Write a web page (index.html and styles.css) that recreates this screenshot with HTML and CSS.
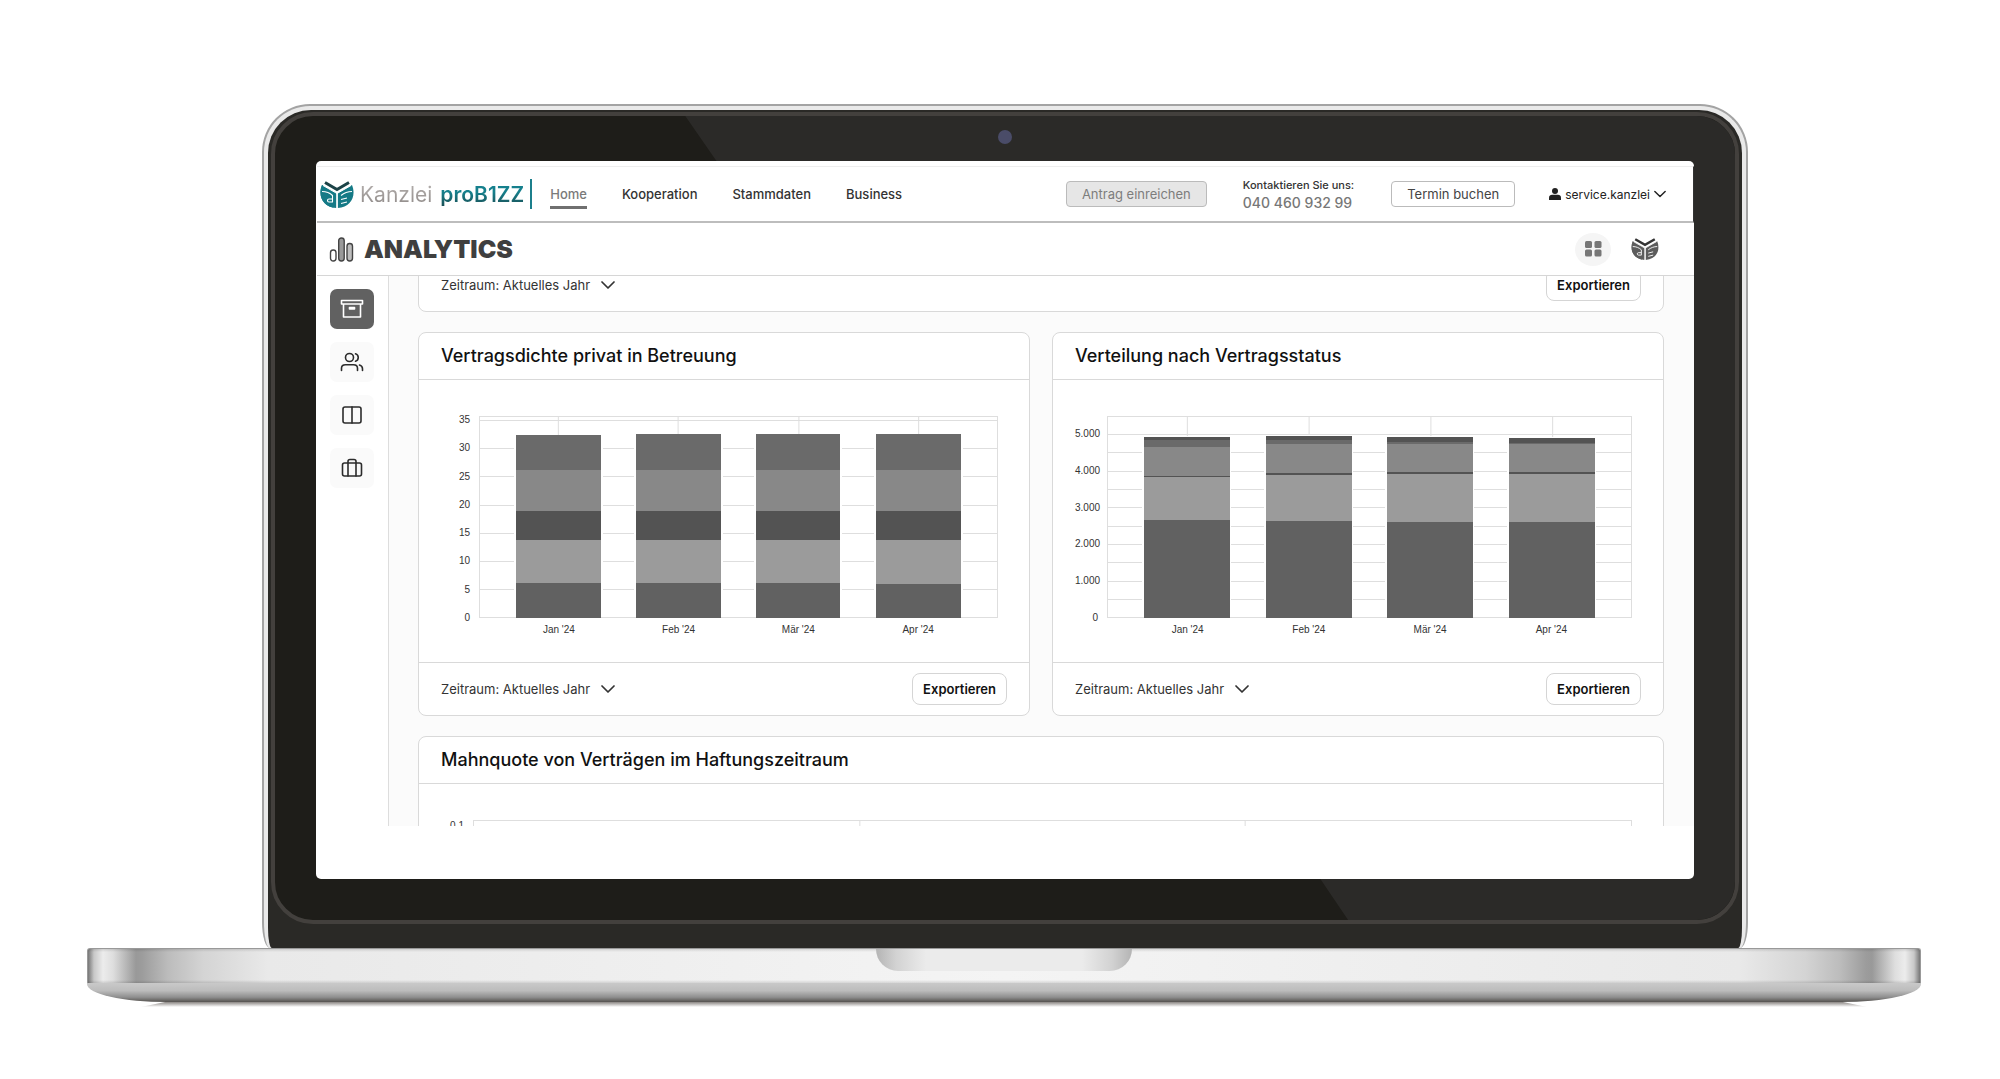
FILE: index.html
```
<!DOCTYPE html>
<html lang="de">
<head>
  <meta charset="UTF-8">
  <meta name="viewport" content="width=device-width, initial-scale=1">
  <title>Analytics – Kanzlei proB1ZZ</title>
  <link rel="stylesheet" href="styles.css">
</head>
<body>

  <svg class="sprite" aria-hidden="true">
    <symbol id="chevron" viewBox="0 0 14 8">
      <path d="M1 1l6 6 6-6" fill="none" stroke="currentColor" stroke-width="1.700" stroke-linecap="round" stroke-linejoin="round"/>
    </symbol>
    <symbol id="owl" viewBox="0 0 34 27">
      <path class="owl-wing" d="M2 4L16.200 12V27C4-.5 4 25.500 16.200 27C3 26-2.500 15 2 4zM32 4L17.800 12V27C31 26 36.500 15 32 4z"/>
      <path class="owl-wing" d="M2 4L16.200 12V27C3 26-2.500 15 2 4z"/>
      <path class="owl-brow" d="M5 1.500l12 7 12-7" fill="none" stroke-width="3"/>
      <path d="M3 4.500l14 8 14-8M17 12v15" fill="none" stroke="#fff" stroke-width="1"/>
      <path d="M2 10.500c4 0 8 1.500 10.500 4v6.500H9c-2 0-2-3 0-3h3.500M32 10.500c-4 0-8 1.500-11 4M21 18.500l6-1.500M21 22.500l6-1.500" fill="none" stroke="#fff" stroke-width="1.100"/>
    </symbol>
  </svg>

  <div class="laptop">
    <div class="lid">
      <div class="bezel">
        <div class="glass">
          <span class="camera"></span>

          <div class="screen">
            <header class="topbar">
              <a class="brand" href="#">
                <svg class="brand-logo" viewBox="0 0 34 27"><use href="#owl"/></svg>
                <span class="brand-name">Kanzlei</span>
                <span class="brand-product">proB1ZZ</span>
              </a>
              <nav class="nav">
                <a class="active" href="#">Home</a>
                <a href="#">Kooperation</a>
                <a href="#">Stammdaten</a>
                <a href="#">Business</a>
              </nav>
              <div class="actions">
                <button class="btn btn-muted" type="button">Antrag einreichen</button>
                <div class="contact">
                  <span>Kontaktieren Sie uns:</span>
                  <a href="tel:04046093299">040 460 932 99</a>
                </div>
                <button class="btn" type="button">Termin buchen</button>
                <button class="user" type="button">
                  <svg width="12" height="12" viewBox="0 0 12 12" fill="currentColor"><circle cx="6" cy="3" r="3"/><path d="M0 12V9.500C0 7.700 1.500 6.800 3 6.800h6c1.500 0 3 .9 3 2.700V12z"/></svg>
                  service.kanzlei
                  <svg width="12" height="8"><use href="#chevron"/></svg>
                </button>
              </div>
            </header>

            <div class="titlebar">
              <svg class="title-icon" viewBox="0 0 24 25" fill="#bdbdbd" stroke="#444" stroke-width="1.400">
                <rect x="1" y="13" width="5.500" height="11" rx="2.700" fill="#fff"/>
                <rect x="9.200" y="1" width="5.500" height="23" rx="2.700" fill="#999"/>
                <rect x="17.500" y="6.500" width="5.500" height="17.500" rx="2.700"/>
              </svg>
              <h1>ANALYTICS</h1>
              <button class="apps" type="button" aria-label="Apps">
                <svg width="17" height="16" viewBox="0 0 17 16" fill="#777"><rect width="7" height="7" rx="1.500"/><rect x="9.500" width="7" height="7" rx="1.500"/><rect y="8.500" width="7" height="7" rx="1.500"/><rect x="9.500" y="8.500" width="7" height="7" rx="1.500"/></svg>
              </button>
              <svg class="title-logo" viewBox="0 0 34 27"><use href="#owl"/></svg>
            </div>

            <div class="workspace">
              <aside class="sidebar">
                <button class="side-btn selected" type="button" aria-label="Archiv">
                  <svg width="24" height="20" viewBox="0 0 24 20"><path d="M1.500 1.500h21v3.500h-21zM3.500 5v13h17V5M9.500 8.500h5v1.500h-5z"/></svg>
                </button>
                <button class="side-btn" type="button" aria-label="Kunden">
                  <svg width="24" height="20" viewBox="0 0 24 20"><circle cx="9.500" cy="5.500" r="4"/><path d="M1.500 18.500v-2.200c0-2 1.700-3.500 4-3.500h8c2.300 0 4 1.500 4 3.500v2.200M15.500 1.700a4 4 0 0 1 0 7.600M19.500 13c2 .6 3 1.900 3 3.700v1.800"/></svg>
                </button>
                <button class="side-btn" type="button" aria-label="Spalten">
                  <svg width="24" height="20" viewBox="0 0 24 20"><rect x="3" y="2" width="18" height="16" rx="2"/><path d="M12 2v16"/></svg>
                </button>
                <button class="side-btn" type="button" aria-label="Verträge">
                  <svg width="24" height="20" viewBox="0 0 24 20"><rect x="2.500" y="5" width="19" height="13" rx="2"/><path d="M8 18V3.500C8 2.300 8.700 1.500 10 1.500h4c1.300 0 2 .8 2 2V18"/></svg>
                </button>
              </aside>

              <main class="content">
                <section class="card wide scrolled">
                  <footer class="card-foot">
                    <button class="period" type="button">Zeitraum: Aktuelles Jahr <svg width="14" height="8"><use href="#chevron"/></svg></button>
                    <button class="export" type="button">Exportieren</button>
                  </footer>
                </section>

                <section class="card">
                  <h2>Vertragsdichte privat in Betreuung</h2>
                  <div class="chart">
                    <div class="y-axis tens">
                      <span>35</span><span>30</span><span>25</span><span>20</span><span>15</span><span>10</span><span>5</span><span>0</span>
                    </div>
                    <svg class="plot" viewBox="0 0 520 202" preserveAspectRatio="none">
                      <path class="lines" d="M0 4.500h520M0 32.500h520M0 60.500h520M0 89.500h520M0 117.500h520M0 145.500h520M0 173.500h520M79.500 0v20M199.500 0v20M320.500 0v20M440.500 0v20"/>
                      <rect class="lines" x=".5" y=".5" width="519" height="201"/>
                      <path class="halo" d="M35 19h89v182h-89zM155 18h89v183h-89zM276 18h88v183h-88zM396 18h89v183h-89z"/>
                      <path class="c1" d="M37 167h85v35H37zM157 167h85v35h-85zM278 167h84v35h-84zM398 168h85v34h-85z"/>
                      <path class="c2" d="M37 124h85v43H37zM157 124h85v43h-85zM278 124h84v43h-84zM398 124h85v44h-85z"/>
                      <path class="c3" d="M37 95h85v29H37zM157 95h85v29h-85zM278 95h84v29h-84zM398 95h85v29h-85z"/>
                      <path class="c4" d="M37 54h85v41H37zM157 54h85v41h-85zM278 54h84v41h-84zM398 54h85v41h-85z"/>
                      <path class="c5" d="M37 19h85v35H37zM157 18h85v36h-85zM278 18h84v36h-84zM398 18h85v36h-85z"/>
                    </svg>
                    <div class="x-axis">
                      <span>Jan '24</span><span>Feb '24</span><span>Mär '24</span><span>Apr '24</span>
                    </div>
                  </div>
                  <footer class="card-foot">
                    <button class="period" type="button">Zeitraum: Aktuelles Jahr <svg width="14" height="8"><use href="#chevron"/></svg></button>
                    <button class="export" type="button">Exportieren</button>
                  </footer>
                </section>

                <section class="card">
                  <h2>Verteilung nach Vertragsstatus</h2>
                  <div class="chart chart-status">
                    <div class="y-axis thousands">
                      <span>5.000</span><span>4.000</span><span>3.000</span><span>2.000</span><span>1.000</span><span>0</span>
                    </div>
                    <svg class="plot" viewBox="0 0 526 202" preserveAspectRatio="none">
                      <path class="lines" d="M0 18.500h526M0 36.500h526M0 55.500h526M0 73.500h526M0 91.500h526M0 110.500h526M0 128.500h526M0 146.500h526M0 165.500h526M0 183.500h526M80.500 0v22M202.500 0v22M324.500 0v22M446.500 0v22"/>
                      <rect class="lines" x=".5" y=".5" width="525" height="201"/>
                      <path class="halo" d="M35 20h89v181H35zM157 19h89v182h-89zM279 20h89v181h-89zM401 21h89v180h-89z"/>
                      <path class="c1" d="M37 104h86v98H37zM159 105h86v97h-86zM281 106h86v96h-86zM403 106h86v96h-86z"/>
                      <path class="c2" d="M37 60h86v44H37zM159 58h86v47h-86zM281 57h86v49h-86zM403 57h86v49h-86z"/>
                      <path class="c4" d="M37 31h86v29H37zM159 28h86v30h-86zM281 28h86v29h-86zM403 28h86v29h-86z"/>
                      <path class="c5" d="M37 24h86v7H37zM159 24h86v4h-86zM281 26h86v2h-86zM403 27h86v1h-86z"/>
                      <path class="c3" d="M37 21h86v3H37zM159 20h86v4h-86zM281 21h86v5h-86zM403 22h86v5h-86zM37 60h86v1H37zM159 57h86v2h-86zM281 56h86v2h-86zM403 56h86v2h-86z"/>
                    </svg>
                    <div class="x-axis">
                      <span>Jan '24</span><span>Feb '24</span><span>Mär '24</span><span>Apr '24</span>
                    </div>
                  </div>
                  <footer class="card-foot">
                    <button class="period" type="button">Zeitraum: Aktuelles Jahr <svg width="14" height="8"><use href="#chevron"/></svg></button>
                    <button class="export" type="button">Exportieren</button>
                  </footer>
                </section>

                <section class="card wide">
                  <h2>Mahnquote von Verträgen im Haftungszeitraum</h2>
                  <div class="chart chart-status">
                    <div class="y-axis"><span>0,1</span></div>
                    <svg class="plot" viewBox="0 0 1161 202" preserveAspectRatio="none">
                      <rect class="lines" x=".5" y=".5" width="1160" height="201"/>
                      <path class="lines" d="M387.500 0v202M773.500 0v202"/>
                    </svg>
                  </div>
                </section>
              </main>
            </div>
          </div>
        </div>
      </div>
    </div>

    <div class="base">
      <div class="notch"></div>
    </div>
    <div class="underside"></div>
    <div class="shadow"></div>
  </div>

</body>
</html>
```

FILE: styles.css
```
* {
  margin: 0;
  padding: 0;
  box-sizing: border-box;
}
body {
  background: #fff;
  font-family: Inter, "Liberation Sans", sans-serif;
  font-size: 13px;
  color: #333;
}
a {
  color: inherit;
  text-decoration: none;
}
button {
  font: inherit;
  color: inherit;
  background: none;
  border: none;
  cursor: pointer;
}
.sprite {
  position: absolute;
  width: 0;
  height: 0;
}

/* laptop */
.laptop {
  padding: 104px 79px 64px 87px;
}
.lid {
  margin: 0 173px 0 175px;
  padding: 4px;
  padding-bottom: 0;
  background: #e9e9e9;
  border: 2px solid #a3a3a3;
  border-bottom: none;
  border-radius: 48px 48px 8px 8px / 48px 48px 26px 26px;
}
.bezel {
  padding: 2px 3px 24px;
  background: #2a2926;
  border-radius: 43px 43px 4px 4px / 43px 43px 20px 20px;
}
.glass {
  position: relative;
  padding: 45px 41px 41px;
  background: #1e1d19;
  border: 4px solid #43403d;
  border-radius: 42px;
  overflow: hidden;
}
.glass::before {
  content: "";
  position: absolute;
  inset: 0;
  background: #2b2a28;
  clip-path: polygon(28.1% 0, 30.2% 5.5%, 71.6% 94.9%, 73.5% 100%, 100% 100%, 100% 0);
}
.camera {
  position: absolute;
  top: 14px;
  left: 50%;
  width: 14px;
  height: 14px;
  margin-left: -7px;
  background: #4a4c68;
  border-radius: 50%;
}
.base {
  height: 35px;
  border: 1px solid #999;
  border-width: 1px 1px 0;
  border-radius: 3px 3px 0 0;
  background:
    linear-gradient(to bottom, rgba(0, 0, 0, .12), transparent 3px, transparent 31px, rgba(0, 0, 0, .12)),
    linear-gradient(to right, #777, #c8c8c8 6px, #ececec 15px, #dedede 25px, #999 48px, #9c9c9c 54px, #bcbcbc 80px, #d4d4d4 115px, #e9e9e9 180px, #f4f4f4 50%, #e9e9e9 calc(100% - 180px), #d4d4d4 calc(100% - 115px), #bcbcbc calc(100% - 80px), #9c9c9c calc(100% - 54px), #999 calc(100% - 48px), #dedede calc(100% - 25px), #ececec calc(100% - 15px), #c8c8c8 calc(100% - 6px), #777);
}
.notch {
  width: 256px;
  height: 22px;
  margin: 0 auto;
  background: linear-gradient(to right, #b4b4b4, #d2d2d2 20px, #ebebeb 50px, #ebebeb calc(100% - 50px), #d2d2d2 calc(100% - 20px), #b4b4b4);
  border-radius: 0 0 22px 22px;
}
.underside {
  height: 19px;
  background: linear-gradient(to bottom, #c9c9c9, #bcbcbc 40%, #8e8e8e 75%, #55524f);
  border-radius: 0 0 80px 80px / 0 0 18px 18px;
}
.shadow {
  height: 5px;
  margin: 0 54px;
  background: linear-gradient(to bottom, #8a8582, #fff);
  clip-path: polygon(24px 0, calc(100% - 24px) 0, 100% 100%, 0 100%);
}

/* screen */
.screen {
  position: relative;
  display: flex;
  flex-direction: column;
  aspect-ratio: 1378 / 718;
  padding: 5px 0 53px 1px;
  background: #fff;
  border-radius: 5px;
  overflow: hidden;
}
.topbar {
  display: flex;
  align-items: center;
  height: 57px;
  padding-right: 27px;
  padding-left: 3px;
  border-top: 1px solid #eee;
  border-right: 1px solid #333;
  border-bottom: 2px solid #bdbdbd;
  flex: none;
}
.brand {
  display: flex;
  align-items: center;
  height: 30px;
  padding-right: 6px;
  border-right: 2px solid #1c7f8c;
  font-size: 21px;
}
.brand-logo {
  width: 34px;
  height: 27px;
  margin-right: 6px;
  fill: #157a86;
  stroke: #1c4347;
}
.owl-wing {
  stroke: none;
}
.brand-name {
  margin-right: 8px;
  background: linear-gradient(to bottom, #b5b0ae, #8f8a88);
  background-clip: text;
  color: transparent;
}
.brand-product {
  font-weight: 600;
  background: linear-gradient(to bottom, #16808d 40%, #1b4d52);
  background-clip: text;
  color: transparent;
}
.nav {
  display: flex;
  gap: 35px;
  margin-left: 18px;
  font-weight: 500;
}
.nav a {
  padding: 6px 0 4px;
  border-bottom: 3px solid transparent;
  line-height: 16px;
}
.nav .active {
  color: #7a7a7a;
  border-color: #707070;
}
.actions {
  display: flex;
  align-items: center;
  margin-left: auto;
}
.btn {
  height: 26px;
  padding: 0 15px;
  border: 1px solid #bbb;
  border-radius: 4px;
  color: #444;
}
.btn-muted {
  background: #e6e6e6;
  color: #7d7d7d;
}
.contact {
  display: flex;
  flex-direction: column;
  margin: 0 37px 0 36px;
  font-size: 11px;
  font-weight: 500;
  line-height: 17px;
}
.contact a {
  font-size: 14px;
  color: #777;
}
.user {
  display: flex;
  align-items: center;
  gap: 4px;
  margin-left: 34px;
  font-size: 12px;
  color: #222;
}
.titlebar {
  display: flex;
  align-items: center;
  height: 53px;
  padding: 0 35px 0 12px;
  border-bottom: 1px solid #d6d6d6;
  flex: none;
}
.title-icon {
  width: 25px;
  height: 25px;
}
.titlebar h1 {
  margin-left: 10px;
  font-size: 25px;
  font-weight: 900;
  color: #3f3f3f;
}
.apps {
  display: flex;
  align-items: center;
  justify-content: center;
  width: 36px;
  height: 33px;
  margin-left: auto;
  background: #f5f5f5;
  border-radius: 50%;
}
.title-logo {
  width: 28px;
  height: 22px;
  margin-left: 20px;
  fill: #5c5c5c;
  stroke: #333;
}

/* workspace */
.workspace {
  display: flex;
  flex: 1;
  min-height: 0;
}
.sidebar {
  display: flex;
  flex-direction: column;
  gap: 13px;
  width: 72px;
  padding: 13px 14px 0 13px;
  border-right: 1px solid #ddd;
  flex: none;
}
.side-btn {
  display: flex;
  align-items: center;
  justify-content: center;
  width: 44px;
  height: 40px;
  background: #fafafa;
  border-radius: 7px;
}
.side-btn svg {
  fill: none;
  stroke: #2c2c2c;
  stroke-width: 1.600;
  stroke-linecap: round;
  stroke-linejoin: round;
}
.selected {
  background: #616161;
}
.selected svg {
  stroke: #fff;
}
.content {
  display: grid;
  grid-template-columns: 1fr 1fr;
  align-content: start;
  gap: 20px 22px;
  flex: 1;
  padding: 0 30px 0 29px;
  background: #fbfbfb;
  overflow: hidden;
}
.card {
  background: #fff;
  border: 1px solid #d9d9d9;
  border-radius: 8px;
}
.wide {
  grid-column: 1 / -1;
}
.scrolled {
  margin-top: -19px;
}
.card h2 {
  padding: 0 22px;
  border-bottom: 1px solid #d9d9d9;
  font-size: 18px;
  font-weight: 500;
  line-height: 46px;
  color: #111;
}
.card-foot {
  display: flex;
  align-items: center;
  justify-content: space-between;
  height: 53px;
  padding: 0 22px;
  border-top: 1px solid #d9d9d9;
}
.scrolled .card-foot {
  border-top: none;
}
.period {
  display: flex;
  align-items: center;
  gap: 11px;
  color: #333;
}
.export {
  height: 32px;
  padding: 0 10px;
  border: 1px solid #d5d5d5;
  border-radius: 8px;
  font-weight: 600;
  color: #111;
}

/* charts */
.chart {
  display: grid;
  grid-template-columns: 38px 1fr;
  padding: 36px 31px 26px 22px;
  font-family: "Liberation Sans", Arial, sans-serif;
  font-size: 10px;
  line-height: 12px;
}
.chart-status {
  grid-template-columns: 32px 1fr;
}
.y-axis {
  display: flex;
  flex-direction: column;
  justify-content: space-between;
  margin-bottom: -6px;
  padding-right: 9px;
  text-align: right;
}
.tens {
  margin-top: -2px;
}
.thousands {
  margin-top: 12px;
}
.plot {
  display: block;
  width: 100%;
  height: 202px;
  shape-rendering: crispEdges;
}
.x-axis {
  display: flex;
  grid-column: 2;
  padding: 6px 20px 0;
  text-align: center;
}
.x-axis span {
  flex: 1;
}
.lines {
  fill: none;
  stroke: #dedede;
}
.halo {
  fill: #fff;
}
.c1 { fill: #616161; }
.c2 { fill: #9b9b9b; }
.c3 { fill: #535353; }
.c4 { fill: #888; }
.c5 { fill: #6a6a6a; }
```
